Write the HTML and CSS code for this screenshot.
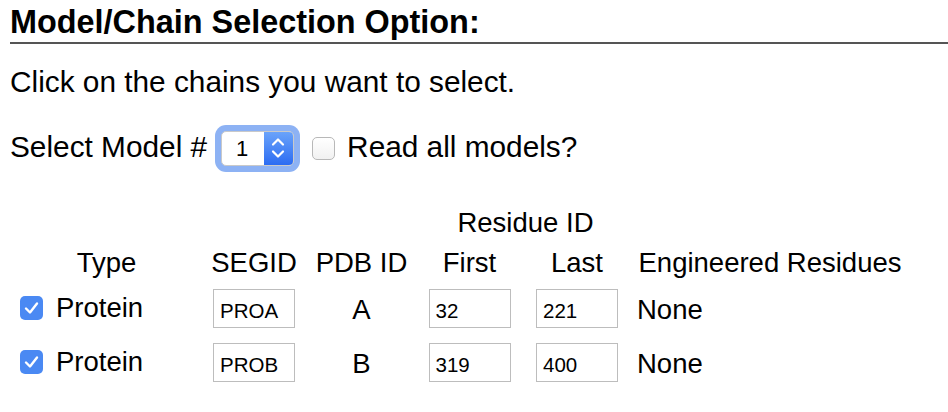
FILE: index.html
```html
<!DOCTYPE html>
<html>
<head>
<meta charset="utf-8">
<link rel="stylesheet" href="styles.css">
</head>
<body>
<h2 class="title">Model/Chain Selection Option:</h2>
<p class="intro">Click on the chains you want to select.</p>
<div class="model-row">
  <span class="label">Select Model #</span>
  <div class="select-ring">
    <div class="select">
      <span class="select-value">1</span>
      <span class="select-btn">
        <svg width="29" height="33" viewBox="0 0 29 33"><polyline points="9,12.5 14,7.5 19,12.5" fill="none" stroke="#fff" stroke-width="2.2" stroke-linecap="round" stroke-linejoin="round"/><polyline points="9,19.5 14,24.5 19,19.5" fill="none" stroke="#fff" stroke-width="2.2" stroke-linecap="round" stroke-linejoin="round"/></svg>
      </span>
    </div>
  </div>
  <span class="checkbox"></span>
  <span class="label">Read all models?</span>
</div>
<div class="chains">
  <div class="head-spacer"></div>
  <div class="residue-head">Residue ID</div>
  <div class="th th-first">Type</div>
  <div class="th">SEGID</div>
  <div class="th">PDB ID</div>
  <div class="th">First</div>
  <div class="th">Last</div>
  <div class="th">Engineered Residues</div>

  <div class="type-cell"><span class="checkbox checked"><svg width="23" height="24" viewBox="0 0 23 24"><polyline points="6,12.5 10,16.5 17,7.5" fill="none" stroke="#fff" stroke-width="2.4" stroke-linecap="round" stroke-linejoin="round"/></svg></span>Protein</div>
  <div class="td"><span class="field">PROA</span></div>
  <div class="td">A</div>
  <div class="td"><span class="field">32</span></div>
  <div class="td"><span class="field">221</span></div>
  <div class="td-left">None</div>

  <div class="type-cell"><span class="checkbox checked"><svg width="23" height="24" viewBox="0 0 23 24"><polyline points="6,12.5 10,16.5 17,7.5" fill="none" stroke="#fff" stroke-width="2.4" stroke-linecap="round" stroke-linejoin="round"/></svg></span>Protein</div>
  <div class="td"><span class="field">PROB</span></div>
  <div class="td">B</div>
  <div class="td"><span class="field">319</span></div>
  <div class="td"><span class="field">400</span></div>
  <div class="td-left">None</div>
</div>
</body>
</html>
```
FILE: styles.css
```css
html, body {
  background: #fff;
}
body {
  margin: 0 0 0 10px;
  font-family: "Liberation Sans", Arial, sans-serif;
  color: #000;
}
.title {
  margin: 0;
  padding-top: 2px;
  font-size: 32.4px;
  line-height: 40px;
  font-weight: bold;
  border-bottom: 2px solid #555;
}
.intro {
  margin: 21px 0 0;
  font-size: 29.8px;
  line-height: 34px;
}
.model-row {
  margin-top: 26px;
  display: flex;
  align-items: center;
  font-size: 29.8px;
  line-height: 34px;
}
.model-row .label {
  padding-bottom: 3px;
}
.select-ring {
  margin-left: 8px;
  padding: 6px;
  background: #8db2f4;
  border-radius: 11px;
}
.select {
  width: 73px;
  height: 35px;
  box-sizing: border-box;
  border: 1px solid #c9c9c9;
  border-radius: 5px;
  background: #fff;
  display: flex;
  overflow: hidden;
}
.select-value {
  flex: 1;
  font-size: 22px;
  line-height: 33px;
  padding-left: 14px;
}
.select-btn {
  width: 29px;
  height: 33px;
  background: linear-gradient(#6aa3fa, #2c6cf2);
  display: flex;
}
.checkbox {
  width: 23px;
  height: 23px;
  box-sizing: border-box;
  border: 1px solid #b8b8b8;
  border-radius: 5px;
  background: linear-gradient(#fff, #f1f1f1);
  margin: 0 12px 0 12px;
  flex: none;
  display: inline-flex;
}
.checkbox.checked {
  border: none;
  height: 24px;
  background: #4a89f3;
  margin: 0 13px 0 0;
}
.chains {
  margin-top: 31px;
  display: grid;
  grid-template-columns: 193px 102px 113px 103px 112px 274px;
  grid-template-rows: 40px 40px 50px 58px;
  align-items: center;
  font-size: 27.5px;
  line-height: 32px;
}
.head-spacer {
  grid-column: 1 / 4;
}
.residue-head {
  grid-column: 4 / 6;
  text-align: center;
}
.th {
  text-align: center;
  white-space: nowrap;
}
.th-first {
  grid-column-start: 1;
}
.type-cell {
  display: flex;
  align-items: center;
  padding-left: 10px;
}
.td {
  display: flex;
  justify-content: center;
  padding-top: 4px;
}
.td-left {
  padding-left: 4px;
  padding-top: 4px;
}
.field {
  width: 82px;
  height: 39px;
  box-sizing: border-box;
  border: 1px solid #bdbdbd;
  font-size: 20.5px;
  line-height: 32px;
  padding: 5px 0 0 6px;
  margin-top: -4px;
  text-align: left;
}
```
